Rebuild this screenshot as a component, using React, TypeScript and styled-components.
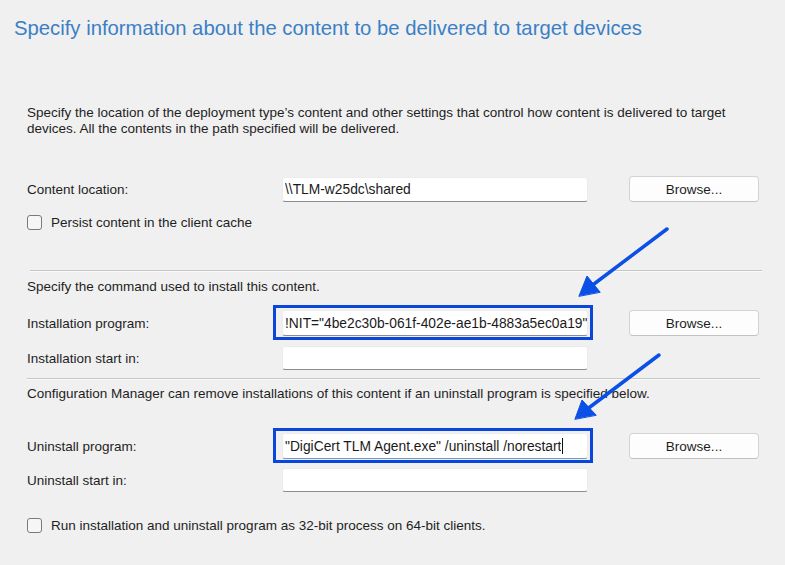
import React from "react";
import styled, { createGlobalStyle } from "styled-components";

const Global = createGlobalStyle`
  html, body { margin: 0; padding: 0; background: #f0f0f0; }
  body { font-family: "Liberation Sans", Arial, sans-serif; color: #1e1e1e; }
  #root { width: 785px; height: 565px; overflow: hidden; }
`;

const Page = styled.div`
  position: relative;
  width: 785px;
  height: 565px;
  box-sizing: border-box;
  padding-top: 16px;
  display: flex;
  flex-direction: column;
  background: #f0f0f0;
`;

const Title = styled.h1`
  margin: 0 0 0 14px;
  font-family: "Liberation Sans", Arial, sans-serif;
  font-weight: normal;
  font-size: 20.3px;
  line-height: 24px;
  color: #3b7fc6;
  white-space: nowrap;
`;

const Body = styled.div`
  display: flex;
  flex-direction: column;
  padding: 0 23px 0 27px;
`;

const Text = styled.p<{ $top: number }>`
  margin: ${(p) => p.$top}px 0 0 0;
  font-size: 13.5px;
  line-height: 16px;
  color: #1e1e1e;
  white-space: nowrap;
`;

const Row = styled.div<{ $top: number; $h: number }>`
  margin-top: ${(p) => p.$top}px;
  height: ${(p) => p.$h}px;
  display: grid;
  grid-template-columns: 255px 306px 171px;
  align-items: center;
`;

const Label = styled.span`
  font-size: 13.5px;
  color: #1e1e1e;
  white-space: nowrap;
`;

const Field = styled.div<{ $h: number; $focused?: boolean }>`
  position: relative;
  height: ${(p) => p.$h}px;
  box-sizing: border-box;
  background: #ffffff;
  border: 1px solid #ececec;
  border-bottom: 1px solid ${(p) => (p.$focused ? "#6a9ad6" : "#8c8c8c")};
  border-radius: 3px;
  display: flex;
  align-items: center;
  padding-left: 2px;
  font-size: 13.8px;
  color: #1a1a1a;
  white-space: nowrap;
  overflow: visible;
`;

const FieldText = styled.span`
  overflow: hidden;
  white-space: nowrap;
`;

const Caret = styled.span`
  display: inline-block;
  width: 1px;
  height: 16px;
  background: #111;
  margin-left: 1px;
`;

const Highlight = styled.span`
  position: absolute;
  top: -6px;
  bottom: -5px;
  left: -10px;
  right: -6px;
  border: 3px solid #0a46dc;
  pointer-events: none;
`;

const Button = styled.button`
  justify-self: end;
  height: 26px;
  width: 130px;
  box-sizing: border-box;
  background: #fdfdfd;
  border: 1px solid #d3d3d3;
  border-bottom-color: #c2c2c2;
  border-radius: 4px;
  font-family: "Liberation Sans", Arial, sans-serif;
  font-size: 13.5px;
  color: #1e1e1e;
  padding: 0;
`;

const CheckRow = styled.label<{ $top: number }>`
  margin-top: ${(p) => p.$top}px;
  height: 16px;
  display: flex;
  align-items: center;
  gap: 9px;
  font-size: 13.5px;
  color: #1e1e1e;
  white-space: nowrap;
`;

const Box = styled.span`
  flex: none;
  width: 15px;
  height: 15px;
  box-sizing: border-box;
  border: 1px solid #7a7a7a;
  border-radius: 3px;
  background: #f6f6f6;
`;

const Separator = styled.div<{ $top: number; $left: number; $right: number }>`
  margin: ${(p) => p.$top}px ${(p) => p.$right}px 0 ${(p) => p.$left}px;
  height: 1px;
  background: #c6c6c6;
  box-shadow: 0 1px 0 #fafafa;
`;

const Arrows = styled.svg`
  position: absolute;
  left: 0;
  top: 0;
  pointer-events: none;
`;

export default function App() {
  return (
    <>
      <Global />
      <Page>
        <Title>Specify information about the content to be delivered to target devices</Title>
        <Body>
          <Text $top={65}>
            Specify the location of the deployment type’s content and other settings that control how content is delivered to target
            <br />
            devices. All the contents in the path specified will be delivered.
          </Text>

          <Row $top={39} $h={26}>
            <Label>Content location:</Label>
            <Field $h={25}>
              <FieldText>\\TLM-w25dc\shared</FieldText>
            </Field>
            <Button>Browse...</Button>
          </Row>

          <CheckRow $top={12}>
            <Box />
            Persist content in the client cache
          </CheckRow>

          <Separator $top={40} $left={3} $right={0} />

          <Text $top={8}>Specify the command used to install this content.</Text>

          <Row $top={15} $h={26}>
            <Label>Installation program:</Label>
            <Field $h={26}>
              <FieldText>!NIT="4be2c30b-061f-402e-ae1b-4883a5ec0a19"</FieldText>
              <Highlight />
            </Field>
            <Button>Browse...</Button>
          </Row>

          <Row $top={10} $h={24}>
            <Label>Installation start in:</Label>
            <Field $h={24} />
          </Row>

          <Separator $top={8} $left={0} $right={2} />

          <Text $top={7}>
            Configuration Manager can remove installations of this content if an uninstall program is specified below.
          </Text>

          <Row $top={31} $h={26}>
            <Label>Uninstall program:</Label>
            <Field $h={26} $focused>
              <FieldText>"DigiCert TLM Agent.exe" /uninstall /norestart</FieldText>
              <Caret />
              <Highlight />
            </Field>
            <Button>Browse...</Button>
          </Row>

          <Row $top={9} $h={24}>
            <Label>Uninstall start in:</Label>
            <Field $h={24} />
          </Row>

          <CheckRow $top={25}>
            <Box />
            Run installation and uninstall program as 32-bit process on 64-bit clients.
          </CheckRow>
        </Body>

        <Arrows width="785" height="565" viewBox="0 0 785 565">
          <g stroke="#0a4fe6" strokeWidth="3.5" strokeLinecap="round" fill="#0a4fe6">
            <line x1="667" y1="229" x2="590" y2="287" />
            <polygon points="579,296 587,276 600,292" strokeWidth="1" strokeLinejoin="round" />
            <line x1="659" y1="355" x2="586" y2="410" />
            <polygon points="575,419 582,400 596,415" strokeWidth="1" strokeLinejoin="round" />
          </g>
        </Arrows>
      </Page>
    </>
  );
}
